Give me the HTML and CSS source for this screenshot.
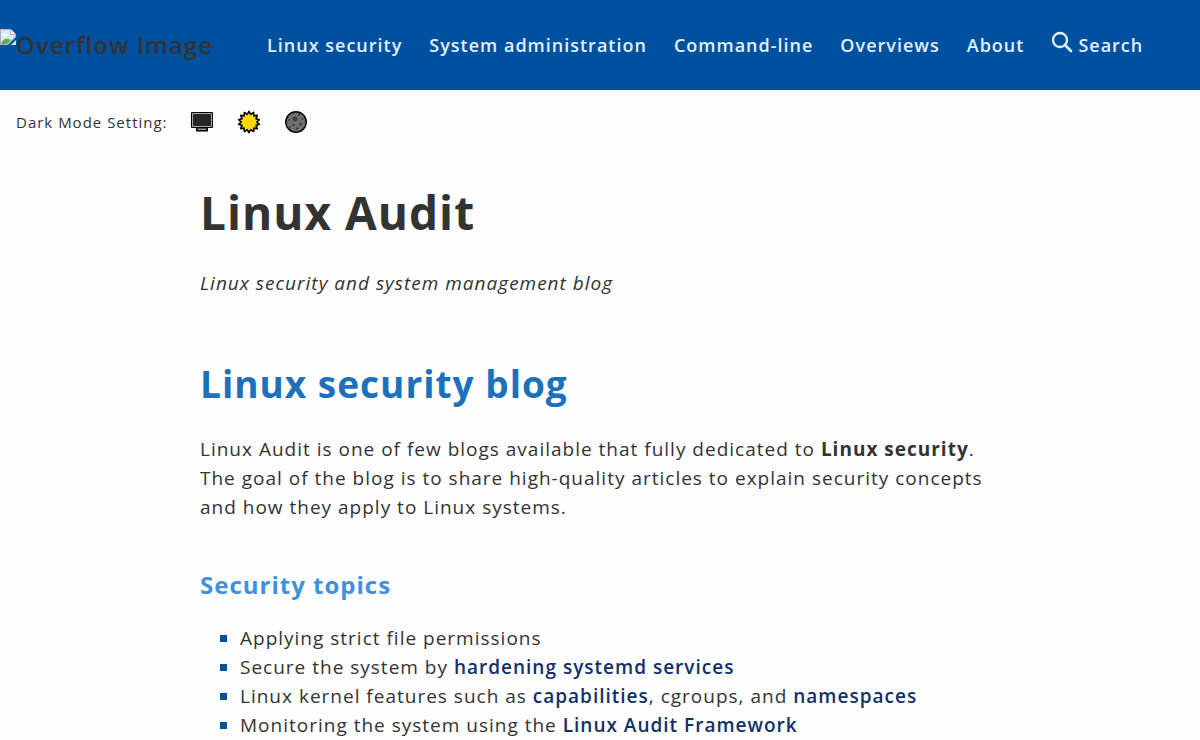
FILE: index.html
```
<!DOCTYPE html>
<html lang="en">
<head>
    <meta charset="UTF-8">
    <meta name="viewport" content="width=device-width, initial-scale=1.0">
    <title>Linux Audit</title>
    <link rel="stylesheet" href="styles.css">
</head>
<body>
    <header class="site-header">
        <a class="logo" href="#">
            <svg class="logo-icon" viewBox="0 0 16 16" aria-hidden="true">
                <path d="M0 0h11l5 5v3L8 16H0z" fill="#a9b3bd"/>
                <path d="M1 1h9v5h5v2l-8 7H1z" fill="#dce8fa"/>
                <path d="M11 1v4h4z" fill="#fff"/>
                <path d="M2 6c0-2 2-3 3-1 2-1 3 1 2 2H2z" fill="#fff"/>
                <path d="M1 15c1-4 4-6 8-5l2 1-4 4z" fill="#4db848"/>
                <path d="M16 11v5h-5z" fill="#dce8fa"/>
            </svg>
            <span>Overflow Image</span>
        </a>
        <nav class="main-nav">
            <a href="#">Linux security</a>
            <a href="#">System administration</a>
            <a href="#">Command-line</a>
            <a href="#">Overviews</a>
            <a href="#">About</a>
            <a class="search-link" href="#">
                <svg class="search-icon" viewBox="0 0 22 22" aria-hidden="true">
                    <circle cx="9" cy="9" r="7" fill="none" stroke="currentColor" stroke-width="2.3"/>
                    <path d="M14 14l6 6" stroke="currentColor" stroke-width="2.6" stroke-linecap="round"/>
                </svg>
                <span>Search</span>
            </a>
        </nav>
    </header>

    <div class="mode-bar">
        <span>Dark Mode Setting:</span>
        <div class="mode-buttons">
            <button type="button" aria-label="System">
                <svg viewBox="0 0 24 24">
                    <path d="M1 3q0-1 1-1h20q1 0 1 1v14q0 1-1 1h-4v3.500H6V18H2q-1 0-1-1z" fill="#000"/>
                    <path d="M2.500 3.500h19v13h-19z" fill="#262626" stroke="#aaa"/>
                    <path d="M7.500 18.500h9v1.500h-9z" fill="#999"/>
                </svg>
            </button>
            <button type="button" aria-label="Light">
                <svg viewBox="0 0 24 24">
                    <path id="sun" fill="#ffd800" stroke="#000" stroke-width="1.600" stroke-linejoin="round" d=""/>
                </svg>
            </button>
            <button type="button" aria-label="Dark">
                <svg viewBox="0 0 24 24">
                    <circle cx="12" cy="12" r="10.200" fill="#707070" stroke="#000" stroke-width="1.500"/>
                    <g fill="#3d3d3d">
                        <circle cx="11" cy="9" r="2.500"/>
                        <circle cx="16.500" cy="14" r="1.500"/>
                        <circle cx="9.500" cy="15" r="1.300"/>
                        <circle cx="5" cy="10" r="1"/>
                        <circle cx="15" cy="5" r="1"/>
                        <circle cx="13" cy="18.500" r="1.200"/>
                        <circle cx="6" cy="17" r="1"/>
                        <circle cx="18.500" cy="9" r="1"/>
                    </g>
                </svg>
            </button>
        </div>
    </div>

    <main class="content">
        <h1>Linux Audit</h1>
        <p class="tagline">Linux security and system management blog</p>

        <h2>Linux security blog</h2>
        <p class="intro">Linux Audit is one of few blogs available that fully dedicated to <strong>Linux security</strong>. The goal of the blog is to share high-quality articles to explain security concepts and how they apply to Linux systems.</p>

        <h3>Security topics</h3>
        <ul class="topics">
            <li>Applying strict file permissions</li>
            <li>Secure the system by <a href="#">hardening systemd services</a></li>
            <li>Linux kernel features such as <a href="#">capabilities</a>, cgroups, and <a href="#">namespaces</a></li>
            <li>Monitoring the system using the <a href="#">Linux Audit Framework</a></li>
        </ul>
    </main>

    <script>
        // Build the sun outline, alternating outer and inner points
        const points = [];
        for (let i = 0; i < 28; i++) {
            const r = i % 2 === 0 ? 10.6 : 7.8;
            const a = Math.PI * i / 14;
            points.push((12 + r * Math.sin(a)).toFixed(2) + ' ' + (12 - r * Math.cos(a)).toFixed(2));
        }
        document.getElementById('sun').setAttribute('d', 'M' + points.join('L') + 'Z');
    </script>
</body>
</html>
```
FILE: styles.css
```
/* Basic Reset */
* {
    margin: 0;
    padding: 0;
    box-sizing: border-box;
}

body {
    font-family: "Segoe UI", "Open Sans", sans-serif;
    font-size: 19px;
    line-height: 29px;
    letter-spacing: 1px;
    color: #333;
    background: #fefefe;
}

a {
    text-decoration: none;
}

/* Header */
.site-header {
    display: flex;
    align-items: center;
    gap: 54px;
    min-height: 90px;
    background: #0050a0;
}

.logo {
    display: flex;
    font-size: 24px;
    font-weight: 600;
    line-height: 32px;
    color: #333;
    white-space: nowrap;
}

.logo-icon {
    width: 16px;
    height: 16px;
}

.main-nav {
    display: flex;
    align-items: center;
    gap: 27px;
}

.main-nav a {
    font-size: 18px;
    font-weight: 600;
    color: #e0f0ff;
    white-space: nowrap;
}

.search-link {
    display: flex;
    gap: 5px;
}

.search-icon {
    width: 22px;
    height: 22px;
}

/* Dark mode setting */
.mode-bar {
    display: flex;
    align-items: center;
    gap: 22px;
    padding: 19px 16px;
    font-size: 15px;
    line-height: 26px;
}

.mode-buttons {
    display: flex;
    gap: 23px;
}

.mode-buttons button {
    width: 24px;
    height: 24px;
    border: none;
    background: none;
    cursor: pointer;
}

.mode-buttons svg {
    display: block;
    width: 24px;
    height: 24px;
}

/* Content */
.content {
    max-width: 800px;
    margin: 0 auto;
    padding-top: 20px;
}

h1 {
    font-size: 46px;
    line-height: 76px;
    margin-bottom: 19px;
}

.tagline {
    font-style: italic;
    margin-bottom: 56px;
}

h2 {
    font-size: 37px;
    line-height: 60px;
    margin-bottom: 21px;
    color: #1c71bd;
}

.intro {
    margin-bottom: 42px;
}

.intro strong {
    font-weight: 700;
}

h3 {
    font-size: 24px;
    line-height: 42px;
    margin-bottom: 18px;
    color: #4090e0;
}

.topics {
    padding-left: 40px;
    list-style: square;
}

.topics li::marker {
    color: #0050a0;
}

.topics a {
    font-weight: 600;
    color: #123068;
}
```
